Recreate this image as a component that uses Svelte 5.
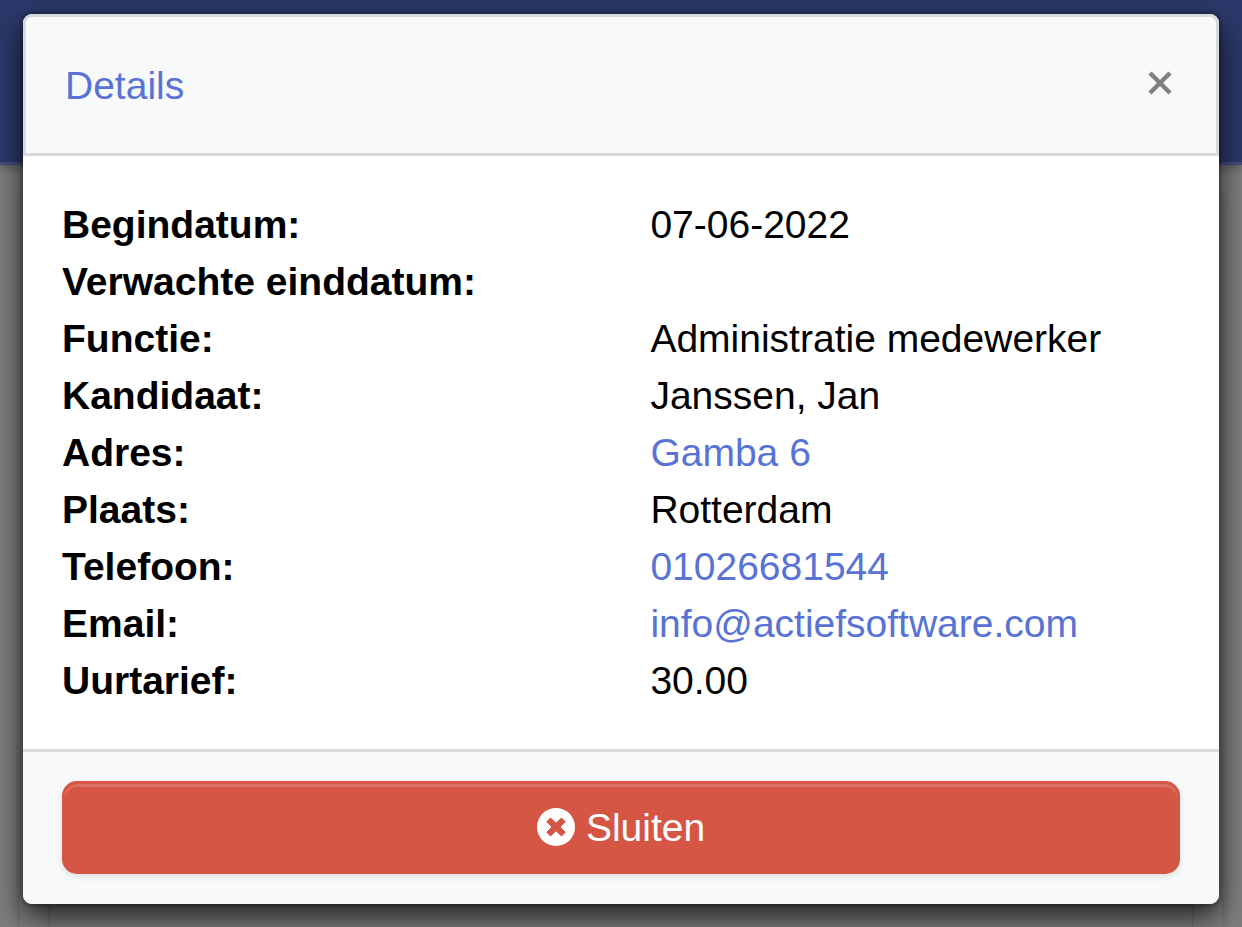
<script lang="ts">
    class detailRow {
        label: string;
        value: string;
        href: string;
        constructor(label: string, value: string, href: string = "") {
            this.label = label;
            this.value = value;
            this.href = href;
        }
    }

    let open = true;

    let rows: detailRow[] = [
        new detailRow("Begindatum:", "07-06-2022"),
        new detailRow("Verwachte einddatum:", ""),
        new detailRow("Functie:", "Administratie medewerker"),
        new detailRow("Kandidaat:", "Janssen, Jan"),
        new detailRow("Adres:", "Gamba 6", "#adres"),
        new detailRow("Plaats:", "Rotterdam"),
        new detailRow("Telefoon:", "01026681544", "tel:01026681544"),
        new detailRow("Email:", "info@actiefsoftware.com", "mailto:info@actiefsoftware.com"),
        new detailRow("Uurtarief:", "30.00"),
    ];

    function closeModal(): void {
        open = false;
    }
</script>

<div class="page">
    <!-- Dimmed page behind the dialog -->
    <div class="backdrop">
        <div class="navbar"></div>
        <div class="panel">
            <div class="panel-inner"></div>
        </div>
    </div>

    {#if open}
        <div class="modal" role="dialog" aria-labelledby="modal-title">
            <header class="modal-header">
                <h3 id="modal-title">Details</h3>
                <button class="close" aria-label="Close" on:click={closeModal}>
                    <svg viewBox="0 0 24 24" width="24" height="24">
                        <path d="M2 2L22 22M22 2L2 22" />
                    </svg>
                </button>
            </header>

            <dl class="modal-body">
                {#each rows as row}
                    <div class="row">
                        <dt>{row.label}</dt>
                        <dd>
                            {#if row.href}
                                <a href={row.href}>{row.value}</a>
                            {:else}
                                {row.value}
                            {/if}
                        </dd>
                    </div>
                {/each}
            </dl>

            <footer class="modal-footer">
                <button class="btn-danger" on:click={closeModal}>
                    <svg viewBox="0 0 38 38" width="38" height="38">
                        <circle cx="19" cy="18" r="19" fill="#fff" />
                        <path
                            d="M13.5 9L19 14.2L24.5 9L28.2 12.7L23 18L28.2 23.3L24.5 27L19 21.8L13.5 27L9.8 23.3L15 18L9.8 12.7Z"
                            fill="#d55645"
                            stroke="#d55645"
                            stroke-linejoin="round"
                        />
                    </svg>
                    Sluiten
                </button>
            </footer>
        </div>
    {/if}
</div>

<style>
    :global(body) {
        margin: 0;
        background-color: #7c7d7f;
    }
    .page {
        position: relative;
        box-sizing: border-box;
        min-height: 100vh;
        padding: 14px 23px 23px;
        overflow: hidden;
        font-family: "Liberation Sans", Arial, sans-serif;
        font-size: 39px;
        line-height: 57px;
        color: #000;
    }
    .backdrop {
        position: absolute;
        inset: 0;
        display: flex;
        flex-direction: column;
    }
    .navbar {
        height: 162px;
        background-color: #2b3869;
        border-bottom: 3px solid #404c78;
        box-shadow: 0 3px 9px rgba(0, 0, 0, 0.3);
    }
    .panel {
        flex: 1;
        margin: 30px 20px 0;
        padding: 0 30px;
        display: flex;
        background-color: #7d7d7d;
        box-shadow: 0 0 9px rgba(0, 0, 0, 0.2);
    }
    .panel-inner {
        flex: 1;
        background-color: #7a7b7d;
        box-shadow: 0 0 3px rgba(0, 0, 0, 0.3);
    }
    .modal {
        position: relative;
        background-color: #fff;
        border-radius: 9px;
        box-shadow: 0 0 0 3px rgba(0, 0, 0, 0.12), 0 12px 28px rgba(0, 0, 0, 0.75);
    }
    .modal-header {
        display: flex;
        align-items: center;
        justify-content: space-between;
        padding: 40px 44px 39px 39px;
        background-color: #f8f9fb;
        border: 3px solid #d8d9dc;
        border-radius: 9px 9px 0 0;
    }
    h3 {
        margin: 0;
        font-size: 39px;
        font-weight: normal;
        color: #5873d5;
    }
    .close {
        display: flex;
        padding: 0 0 6px;
        border: 0;
        background: none;
        cursor: pointer;
    }
    .close svg {
        overflow: visible;
    }
    .close path {
        stroke: #7f8081;
        stroke-width: 4.5;
    }
    .modal-body {
        margin: 0;
        padding: 40px 39px;
    }
    .row {
        display: grid;
        grid-template-columns: 10fr 9fr;
        min-height: 57px;
    }
    dt {
        font-weight: bold;
    }
    dd {
        margin: 0;
    }
    a {
        color: #5873d5;
        text-decoration: none;
    }
    .modal-footer {
        padding: 29px 39px 30px;
        background-color: #f8f9fb;
        border-top: 3px solid #d8d9dc;
        border-radius: 0 0 9px 9px;
    }
    .btn-danger {
        display: flex;
        align-items: center;
        justify-content: center;
        gap: 11px;
        width: 100%;
        padding: 15px;
        border: 3px solid #d55645;
        border-radius: 15px;
        background-color: #d55645;
        box-shadow: inset 0 3px 0 rgba(255, 255, 255, 0.15), 0 3px 6px rgba(0, 0, 0, 0.1);
        color: #fff;
        font: inherit;
        cursor: pointer;
    }
    .btn-danger svg {
        overflow: visible;
    }
</style>
